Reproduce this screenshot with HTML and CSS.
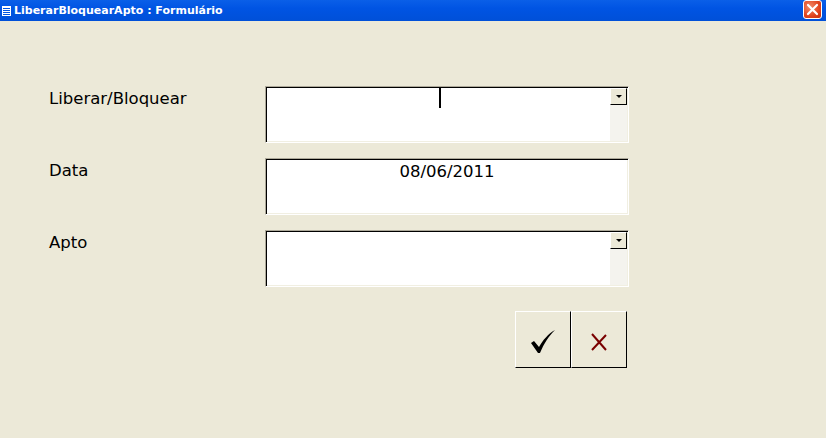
FILE: index.html
```html
<!DOCTYPE html>
<html>
   <head>
      <meta charset="utf-8">
      <title>LiberarBloquearApto : Formulário</title>
      <link rel="stylesheet" href="styles.css">
   </head>
   <body>
      <div class="titlebar">
         <span class="sysicon"></span>
         <span class="title">LiberarBloquearApto : Formulário</span>
         <span class="close">
            <svg width="13" height="13" viewBox="0 0 13 13"><path d="M2 2 L11 11 M11 2 L2 11" stroke="#fff" stroke-width="2.2" stroke-linecap="round"/></svg>
         </span>
      </div>

      <div class="form">
         <div class="row">
            <div class="label">Liberar/Bloquear</div>
            <div class="field combo">
               <div class="value"><span class="caret"></span></div>
               <div class="side"><span class="drop"></span></div>
            </div>
         </div>
         <div class="row">
            <div class="label">Data</div>
            <div class="field">
               <div class="value center">08/06/2011</div>
            </div>
         </div>
         <div class="row">
            <div class="label">Apto</div>
            <div class="field combo">
               <div class="value"></div>
               <div class="side"><span class="drop"></span></div>
            </div>
         </div>

         <div class="buttons">
            <div class="btn">
               <svg width="26" height="24" viewBox="0 0 26 24"><path d="M1 13 L4 11 L9 17 C13 10 18 4 25 0 C19 6 14 13 10 23 L8 23 Z" fill="#000"/></svg>
            </div>
            <div class="btn">
               <svg width="20" height="20" viewBox="0 0 20 20"><path d="M3 2 L17 18 M17 3 L3 18" stroke="#7a0000" stroke-width="2"/></svg>
            </div>
         </div>
      </div>
   </body>
</html>
```

FILE: styles.css
```css
body {
    margin: 0;
    padding: 0;
    width: 826px;
    height: 438px;
    background: #ECE9D8;
    font-family: "DejaVu Sans", Verdana, sans-serif;
    overflow: hidden;
}
.titlebar {
    height: 21px;
    display: flex;
    align-items: center;
    background: linear-gradient(#0a5fe8, #0054e3 40%, #0050d8);
    color: #fff;
    position: relative;
}
.sysicon {
    width: 7px;
    height: 8px;
    margin: 0 3px 0 2px;
    border: 1px solid #fff;
    background: repeating-linear-gradient(#fff 0 1px, #0054e3 1px 2px);
}
.title {
    font-family: Tahoma, "DejaVu Sans", sans-serif;
    font-weight: bold;
    font-size: 11px;
}
.close {
    position: absolute;
    right: 4px;
    top: 0;
    width: 19px;
    height: 19px;
    box-sizing: border-box;
    border: 1px solid #fff;
    border-radius: 3px;
    background: radial-gradient(circle at 35% 35%, #f28c6a, #e0431d 60%, #c4300e);
    display: flex;
    align-items: center;
    justify-content: center;
}
.form {
    padding: 65px 0 0 49px;
}
.row {
    display: grid;
    grid-template-columns: 216px 364px;
    height: 57px;
    margin-bottom: 15px;
}
.label {
    font-size: 16.5px;
    color: #000;
    padding-top: 3px;
}
.field {
    display: flex;
    box-sizing: border-box;
    border-top: 1px solid #aca899;
    border-left: 1px solid #aca899;
    border-bottom: 1px solid #fff;
    border-right: 1px solid #fff;
    box-shadow: inset 1px 1px 0 #000, inset -1px -1px 0 #f1efe2;
    background: #fff;
}
.value {
    flex: 1;
    position: relative;
    font-size: 16.5px;
    padding-top: 3px;
}
.center {
    text-align: center;
}
.caret {
    position: absolute;
    left: 173px;
    top: 1px;
    width: 2px;
    height: 20px;
    background: #000;
}
.side {
    width: 17px;
    margin: 1px 1px 1px 0;
    background: #f4f3ee;
}
.drop {
    display: flex;
    align-items: center;
    justify-content: center;
    width: 15px;
    height: 15px;
    background: #ECE9D8;
    border-top: 1px solid #fff;
    border-left: 1px solid #fff;
    border-right: 1px solid #000;
    border-bottom: 1px solid #000;
}
.drop::after {
    content: "";
    border-left: 3px solid transparent;
    border-right: 3px solid transparent;
    border-top: 3px solid #000;
}
.buttons {
    display: flex;
    margin: 24px 0 0 466px;
}
.btn {
    width: 56px;
    height: 57px;
    box-sizing: border-box;
    border-top: 1px solid #fff;
    border-left: 1px solid #fff;
    border-right: 1px solid #000;
    border-bottom: 1px solid #000;
    display: flex;
    align-items: center;
    justify-content: center;
}
.btn svg {
    margin-top: 4px;
}
```
